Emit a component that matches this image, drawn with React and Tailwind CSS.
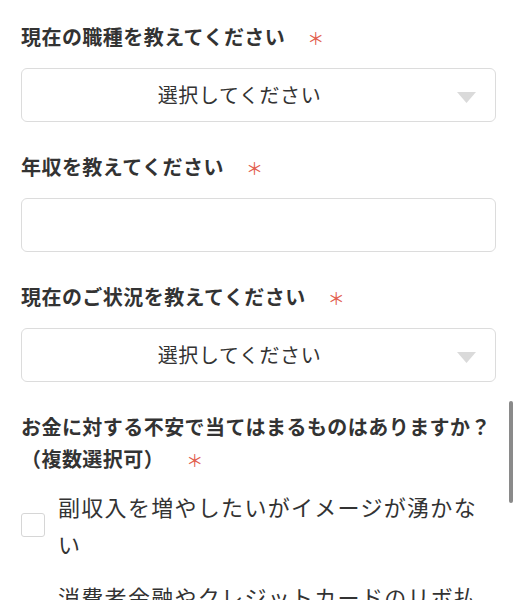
import React from "react";

const font = { fontFamily: '"Noto Sans CJK JP", "Noto Sans", sans-serif' };

function Label({ children, lines }) {
  return (
    <p className="text-[20px] font-bold leading-[32px] tracking-[0.45px] text-[#333]">
      {lines ? lines[0] : children}
      {lines && <br />}
      {lines && lines[1]}
      <span className="ml-[22px] text-[17px] font-normal text-[#e2604f]">＊</span>
    </p>
  );
}

function SelectBox() {
  return (
    <div className="relative mt-[14px] flex h-[54px] items-center justify-center rounded-[6px] border border-[#dcdcdc] bg-white pr-[38px]">
      <span className="text-[20px] tracking-[0.6px] text-[#333]">選択してください</span>
      {/* dropdown arrow */}
      <svg className="absolute right-[19px] top-[23px]" width="19" height="11" viewBox="0 0 19 11">
        <polygon points="0,0 19,0 9.5,11" fill="#dadada" />
      </svg>
    </div>
  );
}

const worries = [
  "副収入を増やしたいがイメージが湧かない",
  "消費者金融やクレジットカードのリボ払いの返済がある",
];

export default function App() {
  return (
    <div style={font} className="relative min-h-[600px] bg-white px-[21px] pt-[21px] pb-10">
      <Label>現在の職種を教えてください</Label>
      <SelectBox />

      <div className="mt-[29px]">
        <Label>年収を教えてください</Label>
        <div className="mt-[14px] h-[54px] rounded-[6px] border border-[#dcdcdc] bg-white"></div>
      </div>

      <div className="mt-[29px]">
        <Label>現在のご状況を教えてください</Label>
        <SelectBox />
      </div>

      <div className="mt-[29px]">
        <Label lines={["お金に対する不安で当てはまるものはありますか？", "（複数選択可）"]} />
        <div className="mt-[12px] flex flex-col gap-[16px]">
          {worries.map((w) => (
            <label key={w} className="flex items-center gap-[13px]">
              <span className="h-[24px] w-[24px] shrink-0 rounded-[3px] border border-[#d6d6d6] bg-white"></span>
              <span className="text-[22px] leading-[37px] tracking-[1.3px] text-[#333]">{w}</span>
            </label>
          ))}
        </div>
      </div>

      {/* scroll indicator */}
      <div className="absolute right-[4px] top-[401px] h-[102px] w-[4px] rounded-full bg-[#8a8a8a]"></div>
    </div>
  );
}
